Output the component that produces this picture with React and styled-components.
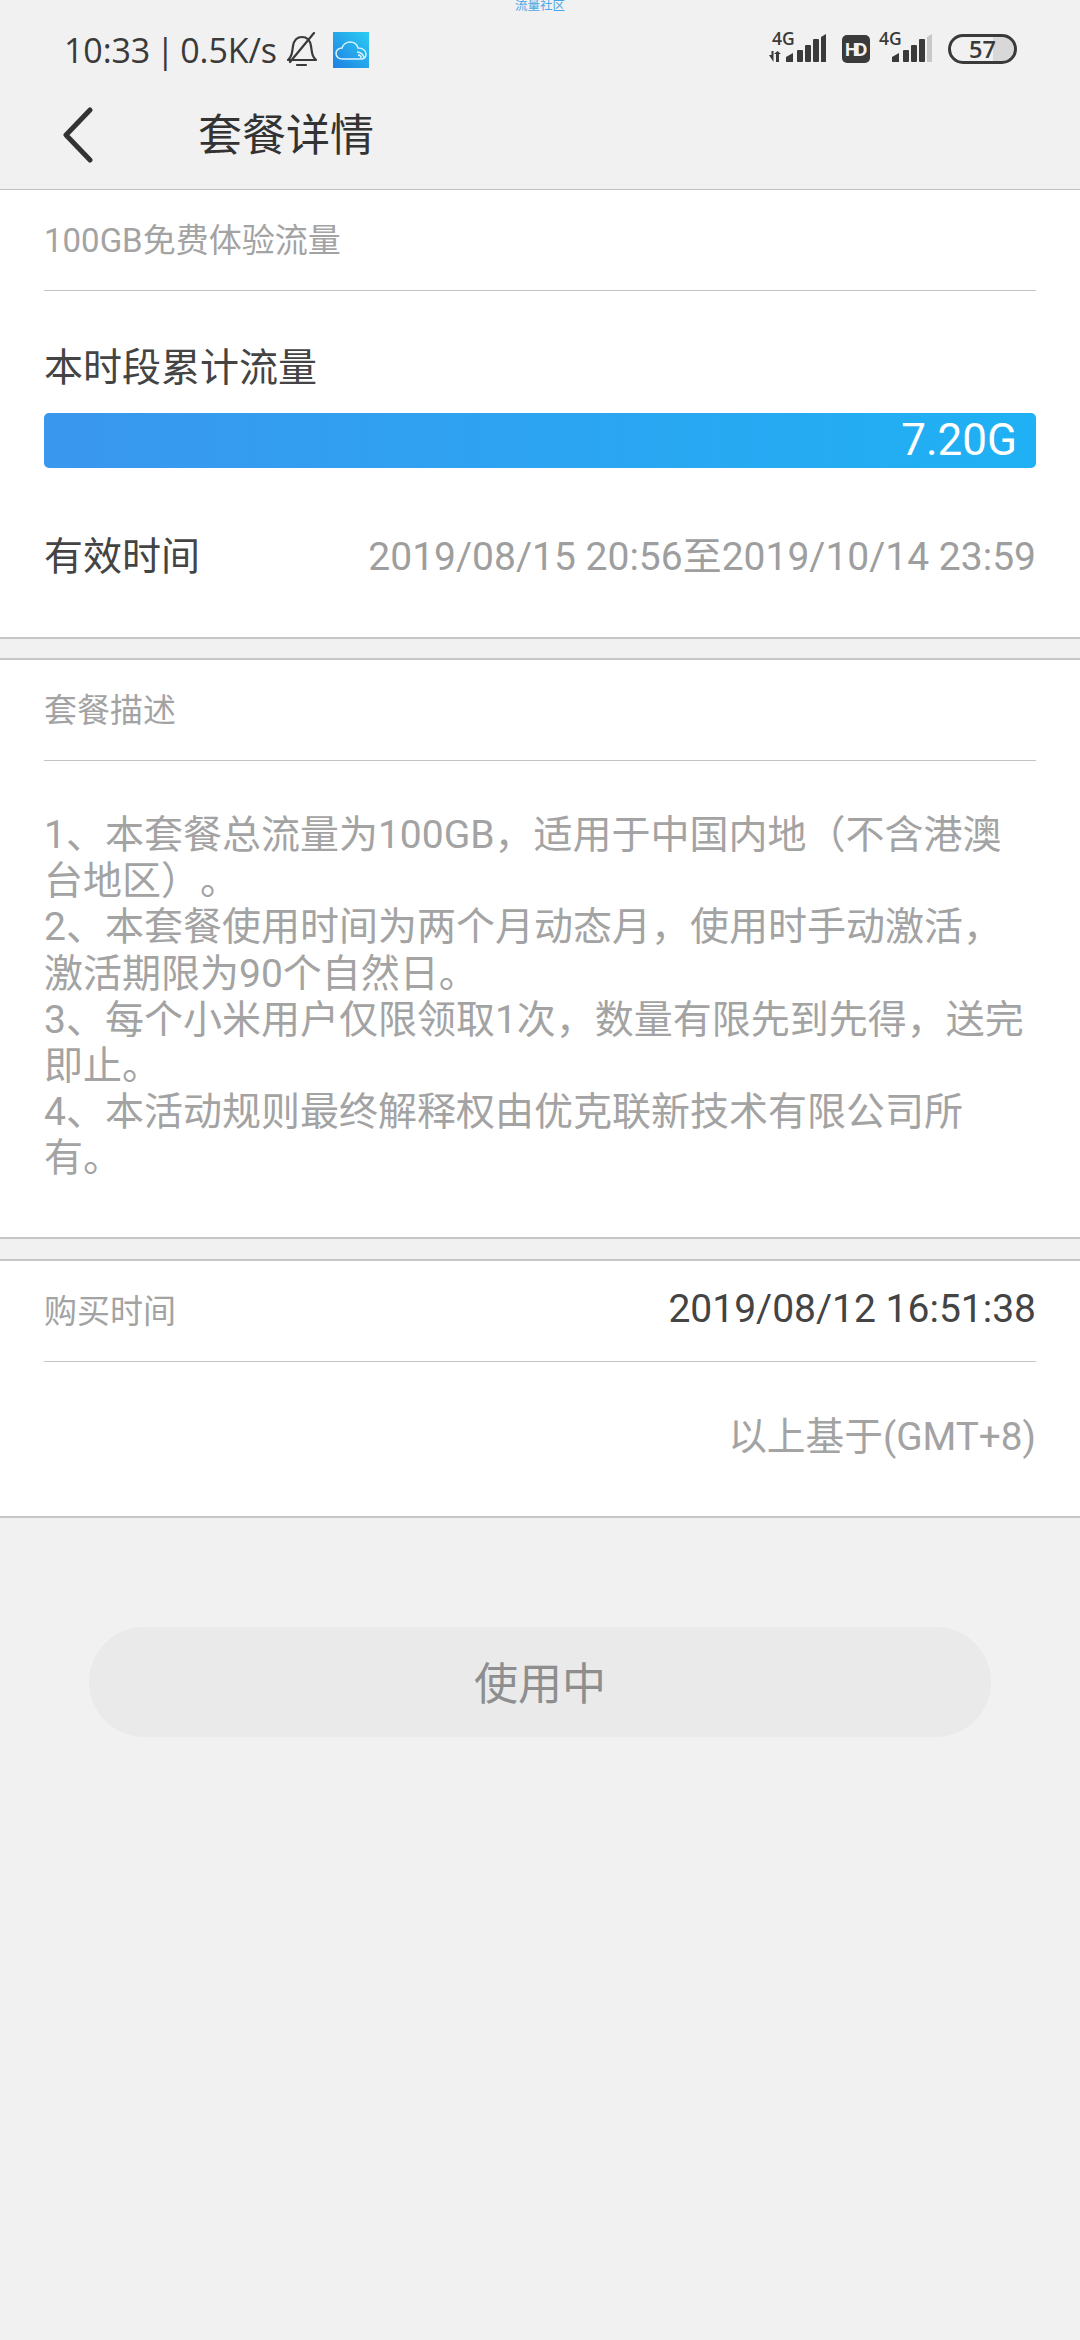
import React from "react";
import styled, { createGlobalStyle } from "styled-components";

const cjk = `Roboto, "Noto Sans CJK SC", sans-serif`;

const Global = createGlobalStyle`
  html, body { margin: 0; padding: 0; background: #f1f1f1; }
  body { font-family: ${cjk}; width: 1080px; height: 2340px; overflow: hidden; }
  * { box-sizing: border-box; }
`;

const Page = styled.div`
  position: relative;
  width: 1080px;
  height: 2340px;
  background: #f1f1f1;
  display: flex;
  flex-direction: column;
`;

const Watermark = styled.div`
  position: absolute;
  top: -1px;
  left: 515px;
  font-size: 12.5px;
  line-height: 14px;
  color: #4aa6e6;
`;

const StatusBar = styled.div`
  height: 80px;
  padding: 20px 64px 0 64px;
  display: flex;
  align-items: center;
  justify-content: space-between;
`;

const StatusLeft = styled.div`
  display: flex;
  align-items: center;
`;

const Clock = styled.span`
  font-family: "Open Sans", sans-serif;
  font-size: 34px;
  line-height: 40px;
  color: #3a3a3a;
  letter-spacing: -0.1px;
  word-spacing: -3px;
`;

const StatusRight = styled.svg`
  display: block;
  align-self: flex-start;
  margin: -20px -3px 0 0;
`;

const NavBar = styled.div`
  height: 110px;
  display: flex;
  align-items: center;
  padding-left: 62px;
  border-bottom: 1px solid #c0c0c0;
`;

const Title = styled.div`
  margin: 3px 0 0 104px;
  font-size: 44px;
  line-height: 60px;
  color: #333;
`;

const Section = styled.section`
  background: #fff;
  height: ${(p) => p.$h}px;
  padding: 0 44px;
  display: flex;
  flex-direction: column;
`;

const Gap = styled.div`
  height: ${(p) => p.$h}px;
  border-top: 2px solid #c6c6c6;
  border-bottom: ${(p) => (p.$open ? "0" : "2px solid #c6c6c6")};
`;

const SectionHead = styled.div`
  height: 101px;
  padding-bottom: 4px;
  display: flex;
  align-items: center;
  justify-content: space-between;
  border-bottom: 1px solid #c4c4c4;
`;

const Muted = styled.span`
  font-size: ${(p) => p.$size}px;
  color: #a3a3a3;
  white-space: nowrap;
`;

const Heading = styled.div`
  margin-top: 49px;
  font-size: 39px;
  line-height: 56px;
  color: #444;
`;

const Bar = styled.div`
  margin-top: 17px;
  height: 55px;
  border-radius: 5px;
  background: linear-gradient(90deg, #3a97ee 0%, #1fb1f4 100%);
  color: #fff;
  font-size: 44px;
  line-height: 55px;
  text-align: right;
  padding-right: 19px;
`;

const ValidRow = styled.div`
  margin-top: 57px;
  height: 56px;
  display: flex;
  align-items: center;
  justify-content: space-between;
`;

const RowLabel = styled.span`
  font-size: 39px;
  color: #444;
`;

const RowValue = styled.span`
  font-size: 39px;
  color: #9e9e9e;
  white-space: nowrap;
`;

const Desc = styled.div`
  margin-top: 51px;
  font-size: 39px;
  line-height: 46.2px;
  color: #a3a3a3;
  width: 990px;
  text-spacing-trim: space-all;
`;

const Line = styled.div`
  white-space: nowrap;
`;

const Time = styled.span`
  font-size: 39px;
  color: #444;
`;

const Zone = styled.div`
  margin-top: 49px;
  font-size: 38.7px;
  line-height: 52px;
  color: #a3a3a3;
  text-align: right;
`;

const ButtonWrap = styled.div`
  padding: 109px 89px 0;
`;

const Pill = styled.div`
  height: 110px;
  border-radius: 55px;
  background: #eaeaea;
  color: #8e8e8e;
  font-size: 44px;
  padding-bottom: 2px;
  display: flex;
  align-items: center;
  justify-content: center;
`;

const BellSvg = styled.svg`
  margin-left: 9px;
  display: block;
`;

const AppIcon = styled.svg`
  margin-left: 15px;
  display: block;
`;

const BackIcon = styled.svg`
  display: block;
`;

const Signal = ({ x, last }) => (
  <g transform={`translate(${x},0)`} fill="#3a3a3a">
    <path d="M0 62 L0 57 L7 53 L7 62 Z" />
    <rect x="11" y="50" width="6" height="12" rx="1" />
    <rect x="19" y="45" width="6" height="17" rx="1" />
    <rect x="27" y="39" width="6" height="23" rx="1" />
    <path d="M35 37 L40 34 V62 H35 Z" fill={last ? "#c8c8c8" : "#3a3a3a"} />
  </g>
);

const smallText = { fontFamily: "'Open Sans', sans-serif", fontWeight: 600 };

export default function App() {
  return (
    <Page>
      <Global />
      <Watermark>流量社区</Watermark>
      <StatusBar>
        <StatusLeft>
          <Clock>10:33 | 0.5K/s</Clock>
          <BellSvg width="32" height="36" viewBox="0 0 32 36" fill="none" stroke="#3a3a3a" strokeWidth="2.2" strokeLinecap="round" strokeLinejoin="round">
            <path d="M2 28 C6 24 6 21 7 14 C8 8 11 5 16 5 C21 5 24 8 25 14 C26 21 26 24 30 28 Z" />
            <path d="M11 33 H20" />
            <path d="M4 30 L28 1" />
          </BellSvg>
          <AppIcon width="36" height="36" viewBox="0 0 36 36">
            <defs>
              <linearGradient id="appg" x1="1" y1="0" x2="0" y2="1">
                <stop offset="0" stopColor="#2bcdf3" />
                <stop offset="1" stopColor="#1f7fe3" />
              </linearGradient>
            </defs>
            <rect width="36" height="36" fill="url(#appg)" />
            <path d="M10 27 C6 27 3 25 3 21 C3 18 6 16 9 16 C10 12 14 10 17 10 C21 10 24 12 25 16 C29 16 33 18 33 22 C33 25 31 27 28 27 Z" fill="none" stroke="#d9f4ff" strokeWidth="1.5" />
            <path d="M24 20 A7 7 0 0 1 31 26 M25 23 A3 3 0 0 1 28 26" fill="none" stroke="#d9f4ff" strokeWidth="1.5" />
          </AppIcon>
        </StatusLeft>
        <StatusRight width="250" height="70" viewBox="0 0 250 70">
          <text x="3" y="45" fontSize="17.5" fill="#3a3a3a" style={smallText}>4G</text>
          <path d="M0 55 H2.5 V51 H4.5 V62 Z M7 62 V54 H5 L8.5 51 L12 54 H10 V62 Z" fill="#3a3a3a" />
          <Signal x={17} />
          <rect x="73" y="35" width="28" height="28" rx="5" fill="#3a3a3a" />
          <text x="75.5" y="56" fontSize="18" fill="#f1f1f1" style={{ ...smallText, fontWeight: 700 }} textLength="23">HD</text>
          <text x="110" y="45" fontSize="17.5" fill="#3a3a3a" style={smallText}>4G</text>
          <Signal x={123} last />
          <path d="M224 36 H233 A13 13 0 0 1 233 62 H224 Z" fill="#d8d8d8" />
          <rect x="180.5" y="35.5" width="66" height="27" rx="13.5" fill="none" stroke="#3a3a3a" strokeWidth="3" />
          <text x="200" y="58" fontSize="23.5" fill="#3a3a3a" style={smallText}>57</text>
        </StatusRight>
      </StatusBar>
      <NavBar>
        <BackIcon width="32" height="56" viewBox="0 0 32 56" fill="none" stroke="#333" strokeWidth="5" strokeLinecap="round" strokeLinejoin="round">
          <path d="M28 3 L4 28 L28 53" />
        </BackIcon>
        <Title>套餐详情</Title>
      </NavBar>
      <Section $h={447}>
        <SectionHead><Muted $size={33}>100GB免费体验流量</Muted></SectionHead>
        <Heading>本时段累计流量</Heading>
        <Bar>7.20G</Bar>
        <ValidRow>
          <RowLabel>有效时间</RowLabel>
          <RowValue>2019/08/15 20:56至2019/10/14 23:59</RowValue>
        </ValidRow>
      </Section>
      <Gap $h={23} />
      <Section $h={577}>
        <SectionHead><Muted $size={33}>套餐描述</Muted></SectionHead>
        <Desc>
          <Line>1、本套餐总流量为100GB，适用于中国内地（不含港澳</Line>
          <Line>台地区）。</Line>
          <Line>2、本套餐使用时间为两个月动态月，使用时手动激活，</Line>
          <Line>激活期限为90个自然日。</Line>
          <Line>3、每个小米用户仅限领取1次，数量有限先到先得，送完</Line>
          <Line>即止。</Line>
          <Line>4、本活动规则最终解释权由优克联新技术有限公司所</Line>
          <Line>有。</Line>
        </Desc>
      </Section>
      <Gap $h={24} />
      <Section $h={255}>
        <SectionHead>
          <Muted $size={33}>购买时间</Muted>
          <Time>2019/08/12 16:51:38</Time>
        </SectionHead>
        <Zone>以上基于(GMT+8)</Zone>
      </Section>
      <Gap $h={2} $open />
      <ButtonWrap>
        <Pill>使用中</Pill>
      </ButtonWrap>
    </Page>
  );
}
